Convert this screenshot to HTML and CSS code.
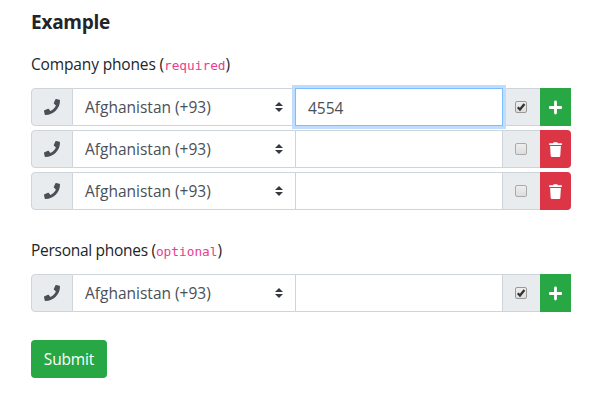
FILE: index.html
```html
<!DOCTYPE html>
<html lang="en">
<head>
<meta charset="utf-8">
<title>Phones</title>
<link rel="stylesheet" href="styles.css">
</head>
<body>
<svg class="defs" aria-hidden="true">
  <symbol id="phone" viewBox="0 0 512 512"><path d="M493.4 24.6l-104-24c-11.3-2.6-22.9 3.3-27.5 13.9l-48 112c-4.2 9.8-1.4 21.3 6.9 28l60.6 49.6c-36 76.7-98.9 140.5-177.2 177.2l-49.6-60.6c-6.8-8.3-18.2-11.1-28-6.9l-112 48C3.9 366.5-2 378.1.6 389.4l24 104C27.1 504.2 36.7 512 48 512c256.1 0 464-207.5 464-464 0-11.2-7.7-20.9-18.6-23.4z"/></symbol>
  <symbol id="plus" viewBox="0 0 13 13"><path d="M6.500 1v11M1 6.500h11" fill="none" stroke="currentColor" stroke-width="2.800" stroke-linecap="round"/></symbol>
  <symbol id="trash" viewBox="0 0 13 15"><path d="M.5 1.200h3.600L4.700.2h3.600l.6 1h3.600q.4 0 .4.400v1q0 .4-.4.400H.5q-.4 0-.4-.4v-1q0-.4.400-.4zM1.100 4h10.800l-.6 9.700q-.1 1.200-1.300 1.200H3q-1.200 0-1.300-1.200z"/></symbol>
  <symbol id="sort" viewBox="0 0 4 5"><path d="M2 0L0 2h4zm0 5L0 3h4z"/></symbol>
  <symbol id="check" viewBox="0 0 13 13"><path d="M3 6.700l2.400 2.500 4.800-5.900" fill="none" stroke="#333" stroke-width="2.500"/></symbol>
</svg>
<form class="form">
  <h1 class="title">Example</h1>
  <section class="section">
    <p class="label">Company phones (<code>required</code>)</p>
    <div class="group">
      <span class="addon"><svg class="phone"><use href="#phone"/></svg></span>
      <div class="select"><span class="country">Afghanistan (+93)</span><svg class="sort"><use href="#sort"/></svg></div>
      <div class="input focused">4554</div>
      <span class="choice"><span class="box"><svg><use href="#check"/></svg></span></span>
      <button type="button" class="action add"><svg><use href="#plus"/></svg></button>
    </div>
    <div class="group">
      <span class="addon"><svg class="phone"><use href="#phone"/></svg></span>
      <div class="select"><span class="country">Afghanistan (+93)</span><svg class="sort"><use href="#sort"/></svg></div>
      <div class="input"></div>
      <span class="choice"><span class="box off"></span></span>
      <button type="button" class="action remove"><svg><use href="#trash"/></svg></button>
    </div>
    <div class="group">
      <span class="addon"><svg class="phone"><use href="#phone"/></svg></span>
      <div class="select"><span class="country">Afghanistan (+93)</span><svg class="sort"><use href="#sort"/></svg></div>
      <div class="input"></div>
      <span class="choice"><span class="box off"></span></span>
      <button type="button" class="action remove"><svg><use href="#trash"/></svg></button>
    </div>
  </section>
  <section class="section">
    <p class="label personal">Personal phones (<code>optional</code>)</p>
    <div class="group">
      <span class="addon"><svg class="phone"><use href="#phone"/></svg></span>
      <div class="select"><span class="country">Afghanistan (+93)</span><svg class="sort"><use href="#sort"/></svg></div>
      <div class="input"></div>
      <span class="choice"><span class="box"><svg><use href="#check"/></svg></span></span>
      <button type="button" class="action add"><svg><use href="#plus"/></svg></button>
    </div>
  </section>
  <button type="button" class="submit"><span>Submit</span></button>
</form>
</body>
</html>
```
FILE: styles.css
```css
* { box-sizing: border-box; }
body {
  margin: 0;
  background: #fff;
  color: #212529;
  font: 15.5px/24px "Open Sans", "Noto Sans", sans-serif;
  letter-spacing: -.15px;
}
.defs { position: absolute; width: 0; height: 0; }
svg { display: block; fill: currentColor; }
.form { width: 540px; margin-left: 31px; padding-top: 10px; }
.title { margin: 0 0 18px; font-size: 19px; line-height: 24px; font-weight: 700; letter-spacing: -.25px; }
.section { margin-bottom: 28px; }
.label { height: 24px; margin: 0 0 12px; }
.personal { letter-spacing: -.28px; }
code { color: #e83e8c; font: 12.8px/20px "DejaVu Sans Mono", monospace; letter-spacing: 0; }
.group { display: flex; height: 38px; margin-bottom: 4px; color: #495057; }
.section .group:last-child { margin-bottom: 0; }
.addon {
  display: flex; align-items: center; justify-content: center;
  width: 42px; background: #e9ecef;
  border: 1px solid #ced4da; border-radius: 4px 0 0 4px;
}
.phone { width: 16px; height: 16px; }
.select {
  display: flex; align-items: center; justify-content: space-between;
  width: 223px; padding: 0 13px 0 12px;
  border: solid #ced4da; border-width: 1px 0;
}
.country { letter-spacing: 0; }
.sort { width: 8px; height: 10px; color: #343a40; }
.input { width: 208px; padding: 7px 12px 5px; border: 1px solid #ced4da; margin-left: -1px; letter-spacing: 0; }
.focused { position: relative; border-color: #80bdff; box-shadow: 0 0 0 3px #bfdeff; }
.choice {
  display: flex; align-items: center; justify-content: center;
  width: 37px; padding-right: 1px; background: #e9ecef;
  border: solid #ced4da; border-width: 1px 0;
}
.box {
  width: 12px; height: 12px; border: 1px solid #999; border-radius: 2px;
  background: linear-gradient(#eee, #ddd);
}
.box svg { width: 12px; height: 12px; margin: -1px; }
.off { border-color: #aaa; }
.action {
  display: flex; align-items: center; justify-content: center;
  width: 31px; padding: 0; border: 0; color: #fff;
}
.action svg { width: 13px; height: 15px; }
.add { background: #28a745; }
.remove { background: #dc3545; border-radius: 0 4px 4px 0; }
.submit {
  width: 76px; height: 38px; padding: 0; border: 0; border-radius: 4px;
  background: #28a745; color: #fff; font: inherit; letter-spacing: -.15px;
}
```
